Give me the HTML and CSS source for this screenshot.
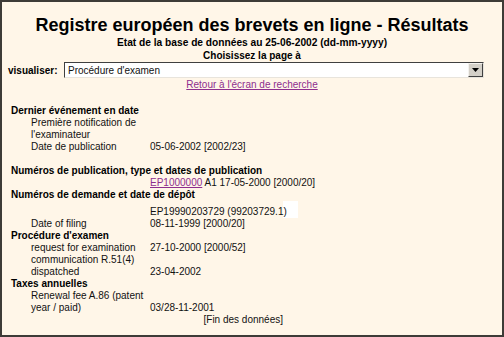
FILE: index.html
```html
<!DOCTYPE html>
<html>
<head>
    <title>Registre européen des brevets en ligne - Résultats</title>
    <link rel="stylesheet" href="styles.css">
</head>
<body>
<div class="page">
    <h1 class="title">Registre européen des brevets en ligne - Résultats</h1>
    <p class="state">Etat de la base de données au 25-06-2002 (dd-mm-yyyy)</p>

    <form class="chooser">
        <div class="chooser-line">Choisissez la page à</div>
        <div class="chooser-row">
            <label>visualiser:</label>
            <div class="combo">
                <span class="combo-text">Procédure d'examen</span>
                <span class="combo-btn">
                    <svg width="7" height="4" viewBox="0 0 7 4"><path d="M0 0h7L3.5 4z" fill="#000"/></svg>
                </span>
            </div>
        </div>
    </form>
    <a class="back" href="#">Retour à l'écran de recherche</a>

    <table class="rec">
        <colgroup>
            <col class="c-ind"><col class="c-lab"><col class="c-val"><col class="c-box">
        </colgroup>
        <tr><th colspan="4">Dernier événement en date</th></tr>
        <tr><td></td><td>Première notification de l'examinateur</td><td></td><td></td></tr>
        <tr><td></td><td>Date de publication</td><td>05-06-2002 [2002/23]</td><td></td></tr>
        <tr class="gap"><td colspan="4"></td></tr>
        <tr><th colspan="4">Numéros de publication, type et dates de publication</th></tr>
        <tr><td></td><td></td><td class="nw"><a href="#">EP1000000</a> A1 17-05-2000 [2000/20]</td><td></td></tr>
        <tr><th colspan="4">Numéros de demande et date de dépôt</th></tr>
        <tr><td></td><td></td><td class="nw">EP19990203729 (99203729.1)</td><td><div class="blank"></div></td></tr>
        <tr><td></td><td>Date of filing</td><td>08-11-1999 [2000/20]</td><td></td></tr>
        <tr><th colspan="4">Procédure d'examen</th></tr>
        <tr><td></td><td>request for examination</td><td>27-10-2000 [2000/52]</td><td></td></tr>
        <tr><td></td><td>communication R.51(4) dispatched</td><td>23-04-2002</td><td></td></tr>
        <tr><th colspan="4">Taxes annuelles</th></tr>
        <tr><td></td><td>Renewal fee A.86 (patent year / paid)</td><td>03/28-11-2001</td><td></td></tr>
        <tr><td colspan="3" class="end">[Fin des données]</td><td></td></tr>
    </table>
</div>
</body>
</html>
```

FILE: styles.css
```css
body {
    margin: 0;
    font-family: "Liberation Sans", Arial, sans-serif;
    color: #111;
}
.page {
    box-sizing: border-box;
    width: 504px;
    height: 337px;
    border: 2px solid #3e3b37;
    background: #fff6e8;
    overflow: hidden;
}
.title {
    margin: 12px 0 0;
    font-size: 18px;
    line-height: 22px;
    text-align: center;
    color: #000;
}
.state {
    margin: 0;
    font-size: 10.2px;
    font-weight: bold;
    line-height: 14px;
    text-align: center;
    color: #000;
}
.chooser {
    margin: 0;
}
.chooser-line {
    font-size: 10px;
    font-weight: bold;
    line-height: 12px;
    text-align: center;
    color: #000;
}
.chooser-row {
    display: flex;
    align-items: center;
    height: 16px;
    padding-left: 6px;
}
.chooser-row label {
    width: 56px;
    font-size: 10px;
    font-weight: bold;
    color: #000;
}
.combo {
    box-sizing: border-box;
    display: flex;
    align-items: center;
    width: 420px;
    height: 16px;
    background: #fff;
    border-top: 1px solid #404040;
    border-left: 1px solid #404040;
    border-right: 1px solid #e8e4dc;
    border-bottom: 1px solid #e8e4dc;
}
.combo-text {
    flex: 1;
    padding-left: 3px;
    font-size: 10px;
}
.combo-btn {
    box-sizing: border-box;
    display: flex;
    align-items: center;
    justify-content: center;
    width: 15px;
    height: 14px;
    background: #d4d0c8;
    border-top: 1px solid #f4f2ee;
    border-left: 1px solid #f4f2ee;
    border-right: 1px solid #404040;
    border-bottom: 1px solid #404040;
}
.back {
    display: block;
    width: max-content;
    margin: 1px auto 0;
    font-size: 10px;
    line-height: 11px;
    color: #8e2f8e;
}
.rec {
    margin: 15px 0 0 9px;
    width: 287px;
    table-layout: fixed;
    border-collapse: collapse;
    font-size: 10px;
    line-height: 12px;
}
.c-ind { width: 20px; }
.c-lab { width: 119px; }
.c-val { width: 133px; }
.c-box { width: 15px; }
.rec th {
    padding: 0;
    text-align: left;
    white-space: nowrap;
    color: #000;
}
.rec td {
    padding: 0;
    vertical-align: bottom;
}
.rec .nw {
    white-space: nowrap;
}
.rec a {
    color: #8e2f8e;
}
.rec .gap td {
    height: 12px;
}
.blank {
    width: 15px;
    height: 17px;
    background: #fff;
}
.rec .end {
    text-align: right;
}
```
